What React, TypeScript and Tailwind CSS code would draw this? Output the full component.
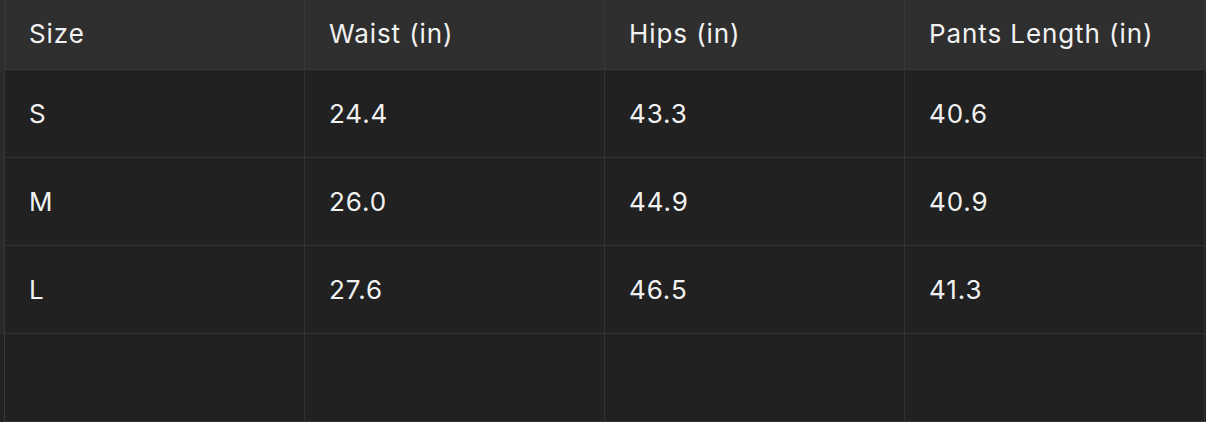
import React from 'react';

const headers = ['Size', 'Waist (in)', 'Hips (in)', 'Pants Length (in)'];

const rows = [
  ['S', '24.4', '43.3', '40.6'],
  ['M', '26.0', '44.9', '40.9'],
  ['L', '27.6', '46.5', '41.3'],
  ['', '', '', ''],
];

export default function App() {
  return (
    <div
      className="w-[1206px] h-[422px] overflow-hidden bg-[#212121] text-[#f2f2f2] flex"
      style={{ fontFamily: 'Inter, "Noto Sans", sans-serif' }}
    >
      {/* edge of the previous column, scrolled off */}
      <div className="w-[4px] flex flex-col shrink-0">
        <div className="h-[70px] bg-[#2e2e2e]" />
        <div className="h-[264px] bg-[#2a2a2a]" />
        <div className="flex-1 bg-[#222222]" />
      </div>

      <div className="flex-1 border-l border-[#383838]">
        <div className="grid grid-cols-[300px_300px_300px_300px] h-[70px] bg-[#2f2f2f] border-b border-[#383838]">
          {headers.map((h) => (
            <div key={h} className="flex items-center pl-6 pb-[3px] text-[26px] tracking-[0.035em] border-r border-[#383838]">
              {h}
            </div>
          ))}
        </div>

        {rows.map((row, i) => (
          <div
            key={i}
            className="grid grid-cols-[300px_300px_300px_300px] h-[88px] border-b border-[#333333]"
          >
            {row.map((cell, j) => (
              <div key={j} className="flex items-center pl-6 text-[26px] tracking-[0.035em] border-r border-[#333333]">
                {cell}
              </div>
            ))}
          </div>
        ))}
      </div>
    </div>
  );
}
